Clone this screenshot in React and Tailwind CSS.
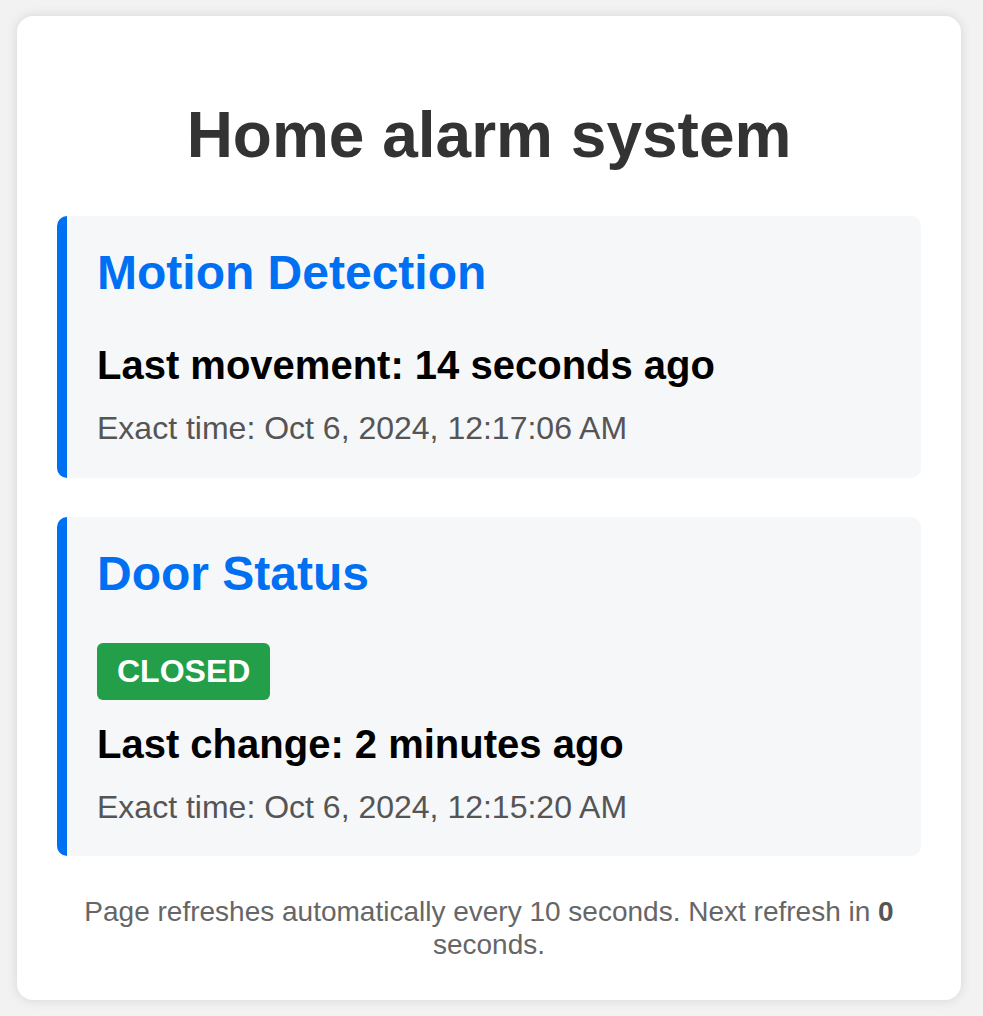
import React from "react";

const font = { fontFamily: '"Liberation Sans", Arial, sans-serif' };

function Section({ title, children }) {
  return (
    <div className="flex flex-col items-start rounded-[10px] border-l-[10px] border-[#0070f3] bg-[#f6f7f9] pl-[30px] pr-[30px] pt-[29px] pb-[31px]">
      <h2 className="text-[48px] leading-[1.15] font-bold text-[#0070f3]">{title}</h2>
      {children}
    </div>
  );
}

export default function App() {
  return (
    <div className="min-h-[1016px] bg-[#f2f2f2] pl-[17px] pr-[22px] pt-[16px] pb-[17px]" style={font}>
      <div className="flex flex-col rounded-[16px] bg-white px-[40px] pt-[40px] pb-[39px] shadow-[0_0_12px_rgba(0,0,0,0.12)]">
        {/* Header */}
        <h1 className="mt-[43px] mb-[43px] text-center text-[64px] leading-[1.15] font-bold text-[#333]">
          Home alarm system
        </h1>

        <div className="flex flex-col gap-[39px]">
          <Section title="Motion Detection">
            <h3 className="mt-[42px] text-[40px] leading-[1.15] font-bold text-black">
              Last movement: 14 seconds ago
            </h3>
            <p className="mt-[22px] text-[32px] leading-[1.15] text-[#555]">
              Exact time: Oct 6, 2024, 12:17:06 AM
            </p>
          </Section>

          <Section title="Door Status">
            <span className="mt-[42px] rounded-[6px] bg-[#229f48] px-[20px] py-[10px] text-[32px] leading-[1.15] font-bold text-white">
              CLOSED
            </span>
            <h3 className="mt-[21px] text-[40px] leading-[1.15] font-bold text-black">
              Last change: 2 minutes ago
            </h3>
            <p className="mt-[22px] text-[32px] leading-[1.15] text-[#555]">
              Exact time: Oct 6, 2024, 12:15:20 AM
            </p>
          </Section>
        </div>

        {/* Footer */}
        <p className="mt-[40px] text-center text-[28px] leading-[1.15] text-[#666]">
          Page refreshes automatically every 10 seconds. Next refresh in <strong className="text-[#555]">0</strong> seconds.
        </p>
      </div>
    </div>
  );
}
